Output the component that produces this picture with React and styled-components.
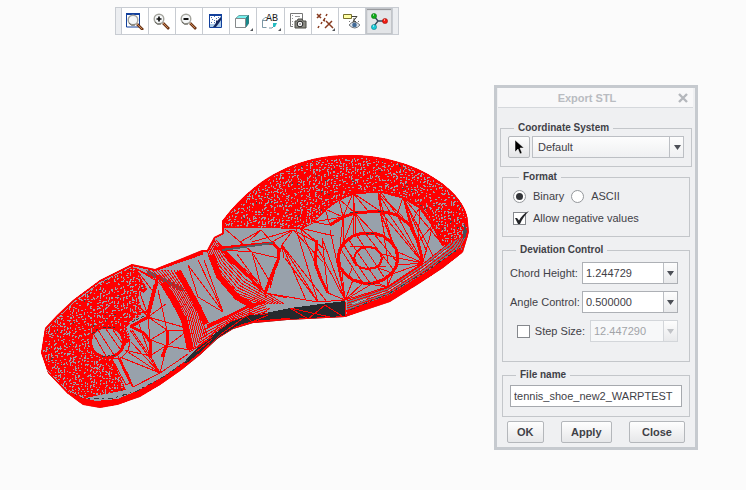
import React, { useState } from "react";
import styled, { createGlobalStyle } from "styled-components";

const GlobalStyle = createGlobalStyle`
  * {
    box-sizing: border-box;
  }
  body {
    margin: 0;
    background: #fbfbfb;
    color: #3f4147;
    font-family: "Liberation Sans", Arial, sans-serif;
    font-size: 11px;
  }
  button, input, select {
    font: inherit;
    color: inherit;
    margin: 0;
  }
`;

const Page = styled.div`
  min-height: 100vh;
  padding-top: 7px;
`;

const Toolbar = styled.div`
  display: flex;
  width: 284px;
  height: 28px;
  margin-left: 115px;
  padding: 0 5px;
  border: 1px solid #c8ccd2;
  background: #eceef1;
`;

const ToolButton = styled.button`
  position: relative;
  flex: 1;
  display: grid;
  place-items: center;
  padding: 0;
  border: 0;
  border-left: 1px solid #c8ccd2;
  background: ${(props) => (props.$active ? "#e3e5e8" : "#fff")};
  box-shadow: ${(props) =>
    props.$active ? "inset 0 0 0 1px #c2c5c9, inset 1px 2px 1px #8f9296" : "none"};
  &:last-child {
    border-right: 1px solid #c8ccd2;
  }
`;

const MoreMark = styled.span`
  position: absolute;
  right: 3px;
  bottom: 3px;
  border-left: 3px solid transparent;
  border-bottom: 3px solid #55585d;
`;

const Workspace = styled.main`
  display: flex;
  align-items: flex-start;
  justify-content: space-between;
  padding: 50px 48px 40px 36px;
`;

const Model = styled.svg`
  flex: none;
  width: 440px;
  height: 270px;
  margin-top: 62px;
`;

const Dialog = styled.section`
  flex: none;
  width: 204px;
  border: 3px solid #c6cacf;
  background: #eff0f2;
`;

const TitleBar = styled.header`
  display: flex;
  align-items: center;
  height: 20px;
  margin: 0 2px 0 1px;
  padding: 0 3px 0 0;
  border-bottom: 1px solid #d5d8dc;
  background: #f8f8f9;
  h1 {
    flex: 1;
    margin: 0;
    font-size: 11px;
    text-align: center;
    color: #b9bcc1;
  }
`;

const CloseIcon = styled.button`
  display: grid;
  place-items: center;
  width: 14px;
  height: 14px;
  padding: 0;
  border: 0;
  background: none;
`;

const Form = styled.form`
  display: flex;
  flex-direction: column;
  gap: 7px;
  padding: 14px 5px 4px;
`;

const Group = styled.fieldset`
  min-width: 0;
  margin: ${(props) => (props.$wide ? "0 -2px -3px" : "0")};
  padding: ${(props) => props.$pad || "2px 7px 8px"};
  border: 1px solid #c3c6ca;
  legend {
    margin-left: 6px;
    padding: 0 4px;
    font-size: 10px;
    font-weight: bold;
    line-height: 12px;
  }
`;

const Row = styled.div`
  display: flex;
  align-items: center;
  justify-content: ${(props) => props.$justify || "flex-start"};
  gap: ${(props) => props.$gap || "7px"};
  height: 22px;
`;

const Stack = styled.div`
  display: flex;
  flex-direction: column;
  gap: 7px;
`;

const PickButton = styled.button`
  display: grid;
  place-items: center;
  width: 22px;
  height: 22px;
  padding: 0;
  border: 1px solid #b4b7bb;
  border-radius: 2px;
  background: linear-gradient(#fdfdfd, #e4e5e7);
`;

const SelectBox = styled.div`
  display: grid;
  flex: 1;
  height: 22px;
  > * {
    grid-area: 1 / 1;
  }
  select {
    appearance: none;
    width: 100%;
    padding: 0 18px 0 5px;
    border: 1px solid #bcbfc4;
    border-radius: 0;
    background: linear-gradient(#fdfdfd, #eff0f2);
  }
`;

const SelectArrow = styled.span`
  justify-self: end;
  display: grid;
  place-items: center;
  width: 15px;
  border-left: 1px solid #bcbfc4;
  pointer-events: none;
`;

const Combo = styled.div`
  display: flex;
  width: ${(props) => (props.$short ? "88px" : "96px")};
  height: 22px;
  border: 1px solid ${(props) => (props.$off ? "#d3d6da" : "#adb0b5")};
  color: ${(props) => (props.$off ? "#a2a4a8" : "#3f4147")};
  input {
    flex: 1;
    min-width: 0;
    padding: 0 3px;
    border: 0;
    background: ${(props) => (props.$off ? "#f7f8f9" : "#fff")};
  }
  button {
    display: grid;
    place-items: center;
    width: 14px;
    padding: 0;
    border: 0;
    border-left: 1px solid ${(props) => (props.$off ? "#d3d6da" : "#bcbfc4")};
    background: linear-gradient(#fdfdfd, #e8e9eb);
  }
`;

const Radio = styled.input`
  appearance: none;
  display: grid;
  place-items: center;
  width: 13px;
  height: 13px;
  border: 1px solid #94979b;
  border-radius: 50%;
  background: #fff;
  &:checked::before {
    content: "";
    width: 7px;
    height: 7px;
    border-radius: 50%;
    background: #333539;
  }
`;

const CheckBox = styled.span`
  display: grid;
  width: 13px;
  height: 13px;
  > * {
    grid-area: 1 / 1;
  }
  input {
    appearance: none;
    width: 13px;
    height: 13px;
    border: 1px solid #85888d;
    background: #fff;
  }
  svg {
    display: none;
    overflow: visible;
    pointer-events: none;
  }
  input:checked + svg {
    display: block;
  }
`;

const FileInput = styled.input`
  display: block;
  width: 100%;
  height: 22px;
  padding: 0 3px;
  border: 1px solid #a6a9ae;
  background: #fff;
`;

const Actions = styled.div`
  display: flex;
  justify-content: space-between;
  margin-top: -3px;
  padding: 0 5px;
`;

const ActionButton = styled.button`
  height: 22px;
  padding: 0 ${(props) => props.$pad || "9px"};
  border: 1px solid #b4b7bb;
  border-radius: 2px;
  background: linear-gradient(#fefefe, #e6e7e9);
  font-weight: bold;
`;

// ---- small drawings ----

const Arrow = ({ off }) => (
  <svg width="7" height="5" viewBox="0 0 7 5">
    <path d="M0 0h7L3.5 5z" fill={off ? "#c0c2c6" : "#4d5057"} />
  </svg>
);

const Check = () => (
  <svg width="13" height="13" viewBox="0 0 13 13">
    <path d="M2 6 4 6 6 8.500C8 5 11 1 16 -1 12 3 9 7 7 12H5z" fill="#222428" />
  </svg>
);

const Lens = ({ x = 6, y = 7, children }) => (
  <g>
    <path d={`M${x + 4} ${y + 4}l6 6`} stroke="#6b3417" strokeWidth="2.6" />
    <path d={`M${x + 4} ${y + 4}l5 5`} stroke="#c98654" strokeWidth="1" />
    <circle cx={x} cy={y} r="4.8" fill="#f5f7f8" stroke="#a3a39c" strokeWidth="1.4" />
    <path d={`M${x - 4} ${y + 3}a5 5 0 0 0 6 2`} stroke="#66665f" fill="none" />
    {children}
  </g>
);

const tools = [
  {
    name: "Refit",
    icon: (
      <g>
        <path d="M.5 2v13h13V2z" fill="#fff" stroke="#12409c" />
        <path d="M0 2h14" stroke="#12409c" strokeWidth="2" />
        <Lens x={7} y={8} />
      </g>
    ),
  },
  {
    name: "Zoom in",
    icon: (
      <Lens>
        <path d="M3.5 7h5M6 4.500v5" stroke="#111" strokeWidth="1.7" />
      </Lens>
    ),
  },
  {
    name: "Zoom out",
    icon: (
      <Lens>
        <path d="M3.5 7h5" stroke="#111" strokeWidth="2" />
      </Lens>
    ),
  },
  {
    name: "Repaint",
    icon: (
      <g>
        <path d="M2.500 2.500h12v13h-12z" fill="#fff" stroke="#12409c" />
        <path d="M14 3v12H3v-3h4l4-3z" fill="#a9cbea" />
        <path d="M4 5.500h1M7 4.500h1M9 6.500h1M5 7.500h1M7 8.500h1M4 10.500h1M11 5.500h1M7 10.500h1" stroke="#4c73b4" />
        <path d="M14 5 10 9 9 8 9 11 6 15 9 15 12 11 14 8z" fill="#16285c" />
        <path d="M2 3h13" stroke="#12409c" strokeWidth="2" />
      </g>
    ),
  },
  {
    name: "Display style",
    more: true,
    icon: (
      <g strokeLinejoin="round">
        <path d="M1.500 6.500 5 3.500h10l-3.500 3z" fill="#75f0ee" stroke="#6ba5a5" />
        <path d="M11.500 6.500 14.500 3.500v8L11.500 15.500z" fill="#148a8c" stroke="#2b7c7e" />
        <path d="M1.500 6.500h10v9h-10z" fill="#fcfefe" stroke="#85898b" />
      </g>
    ),
  },
  {
    name: "Annotations",
    more: true,
    icon: (
      <g>
        <path d="M5 5.500H3L.5 8v7.500h4M.5 8.500H4M12 11.500v2.500l-2 2H7" fill="none" stroke="#7c98a6" />
        <path d="M11 11h4l-2 4h-2z" fill="#25bcc2" />
        <text x="4" y="9" fontFamily="Liberation Mono, monospace" fontSize="10" fill="#222">
          AB
        </text>
      </g>
    ),
  },
  {
    name: "Capture view",
    icon: (
      <g>
        <path d="M1.500 14.500v-13h12V8M1.500 14.500H4" fill="none" stroke="#777" />
        <path d="M3 3.500h1M3 6.500h1M3 9.500h1M3 12.500h1M6 4.500h5" stroke="#999" />
        <path d="M6 9h2l1-2h4l1 2h3v7H6z" fill="#8d8d86" stroke="#4a4a44" />
        <circle cx="11" cy="12" r="2.8" fill="#fafafa" stroke="#222" />
        <circle cx="11" cy="12" r="1" fill="#999" />
      </g>
    ),
  },
  {
    name: "Datum display",
    more: true,
    icon: (
      <g stroke="#873b20" strokeWidth="1.5" fill="none">
        <path d="m1 2 4 4M5 2 1 6M11 2l-1 2M9 6 8 8M6 10l-1 2M3 14l-1 2M7 8l2 1M10 9l7 7M16 9l-7 7" />
      </g>
    ),
  },
  {
    name: "Annotation display",
    icon: (
      <g>
        <path d="M.5 2.500h8v4h-8z" fill="#ffffa5" stroke="#77712d" />
        <path d="M9 4.500h5l-4 5h3M11 6v4" fill="none" stroke="#45453d" />
        <path d="M6 13q5-6 11 0-5 6-11 0z" fill="#dce5ee" stroke="#73777b" />
        <circle cx="11.5" cy="13" r="2.3" fill="#426b97" />
        <path d="M7 10l-1-1M15 10l1-1" stroke="#777" />
      </g>
    ),
  },
  {
    name: "Spin center",
    active: true,
    icon: (
      <g>
        <path d="m4 4 4 5h6M8 9l-4 5" fill="none" stroke="#344759" strokeWidth="1.3" />
        <circle cx="4" cy="4" r="2.6" fill="#0eab19" stroke="#086e0d" strokeWidth=".5" />
        <circle cx="15" cy="9" r="2.6" fill="#f21b12" stroke="#920c07" strokeWidth=".5" />
        <circle cx="4" cy="15" r="2.6" fill="#19cbd8" stroke="#08717a" strokeWidth=".5" />
        <path d="M3 3h1M14 8h1M3 14h1" stroke="#fff" />
      </g>
    ),
  },
];

// ---- shoe sole mesh ----

const line = (pts) => "M" + pts.map((p) => p.join(" ")).join("L");

const closed = (pts) => line(pts) + "Z";

const fan = (from, pts) => pts.map((p) => line([from, p])).join("");

// lines interpolated between two edges with the same number of points
const sweep = (a, b, n) => {
  let d = "";
  for (let i = 0; i <= n; i++) {
    const t = i / n;
    d += line(a.map((p, k) => [p[0] + (b[k][0] - p[0]) * t, p[1] + (b[k][1] - p[1]) * t]));
  }
  return d;
};

// triangles that zigzag from one edge to the other
const zigzag = (a, b) => line(a.flatMap((p, i) => (b[i] ? [p, b[i]] : [p])));

const ring = (cx, cy, rx, ry, n) =>
  Array.from({ length: n }, (_, i) => {
    const t = (i / n) * Math.PI * 2;
    return [Math.round(cx + Math.cos(t) * rx), Math.round(cy + Math.sin(t) * ry)];
  });

// tiny gaps left between the crowded mesh edges
const gaps = (x0, y0, w, h, seed, chance) => {
  let s = seed;
  const rnd = () => {
    s = (s * 1103515245 + 12345) % 2147483648;
    return s / 2147483648;
  };
  let d = "";
  for (let y = y0; y < y0 + h; y += 2) {
    for (let x = x0; x < x0 + w; x += 3) {
      if (rnd() < chance) {
        const px = x + Math.floor(rnd() * 2);
        const py = y + Math.floor(rnd() * 2);
        const shape = rnd();
        if (shape < 0.35) d += `M${px} ${py}h2v1h-2z`;
        else if (shape < 0.65) d += `M${px} ${py}h1v2h-1z`;
        else if (shape < 0.85) d += `M${px} ${py}h2v1h-1v1h-1z`;
        else d += `M${px} ${py}h1v1h-1z`;
      }
    }
  }
  return d;
};

const outline =
  "M222 221C250 184 290 155 350 155C420 155 468 195 468 222L469 232 463 252 443 268 417 285 390 302 360 312 345 317 287 320 253 323 233 329 217 339 200 355 180 371 160 385 140 397 117 405 100 408 83 405 67 393 48 373 41 353 45 328 57 315 73 300 100 280 132 264 155 269 180 259 202 250 207 250 214 237 222 233Z";
const toeTread =
  "M222 221C250 184 290 155 350 155C420 155 468 195 468 222L468 234 448 244 442 246 436 229 426 211 410 199 385 191 355 192 330 204 313 223 300 228 222 226Z";
const heelTread =
  "M132 264L100 280 73 300 45 328 41 353 48 373 67 393 85 398 126 390 112 358 131 340 126 327 143 313 138 297 147 290Z";

const ring2 = [[330, 225], [343, 217], [355, 213], [380, 211], [397, 215], [410, 225], [418, 242], [423, 262]];
const padEdge = [[300, 228], [313, 222], [325, 209], [339, 199], [353, 193], [380, 191], [403, 197], [420, 207], [433, 225], [443, 245]];
const outerRing = ring(368, 258, 30, 25, 18);
const innerRing = ring(368, 258, 14, 11, 12);
const heelRing = ring(107, 342, 17, 15, 14);

const thinMesh = [
  // arch panel
  fan([223, 312], [[188, 265], [198, 260], [204, 260], [198, 297]]),
  fan([198, 297], [[188, 265], [223, 312]]),
  sweep([[207, 250], [215, 272], [232, 294], [262, 304]], [[214, 240], [225, 257], [245, 279], [284, 304]], 7),
  sweep([[216, 240], [232, 258], [258, 281]], [[221, 252], [246, 275], [267, 297]], 4),
  sweep([[146, 270], [168, 292], [183, 317], [190, 352]], [[177, 270], [187, 288], [198, 307], [207, 335]], 10),
  sweep([[203, 330], [232, 317], [265, 302]], [[196, 352], [230, 325], [268, 313]], 5),
  zigzag([[190, 352], [208, 340], [224, 331], [240, 322], [258, 317]], [[205, 341], [218, 327], [234, 318], [250, 313], [270, 308]]),
  // ball of the foot
  fan([252, 252], [[225, 229], [278, 258], [272, 285], [224, 250], [262, 290]]),
  fan([293, 230], [[272, 242], [282, 245], [316, 242], [252, 242], [323, 262]]),
  fan([261, 230], [[240, 242], [272, 242], [250, 240]]),
  fan([282, 245], [[327, 302], [318, 302], [306, 300], [270, 288], [284, 258]]),
  fan([265, 293], [[225, 256], [230, 255], [237, 254], [279, 261], [287, 298]]),
  fan([318, 302], [[296, 229], [285, 258], [265, 293], [345, 300]]),
  fan([300, 228], [[328, 293], [317, 242], [334, 236], [315, 222], [325, 250]]),
  fan([328, 293], [[315, 263], [322, 238], [345, 300]]),
  fan([345, 300], [[315, 243], [322, 238], [330, 230], [338, 260], [342, 272], [353, 280], [363, 283], [375, 282], [387, 287]]),
  zigzag(padEdge.slice(1, 9), ring2),
  fan([353, 193], [[353, 236], [343, 217], [368, 211]]),
  fan([343, 217], [[343, 240], [339, 258], [313, 222]]),
  fan([378, 193], [[384, 233], [390, 212], [403, 217], [393, 244]]),
  fan([403, 197], [[433, 256], [420, 248], [412, 228], [427, 252], [443, 245], [439, 240]]),
  fan([423, 263], [[380, 211], [388, 213], [397, 215], [398, 252], [398, 258], [397, 265], [387, 276], [403, 197], [387, 287]]),
  fan([387, 287], [[363, 283], [375, 282], [388, 275], [398, 262]]),
  fan([355, 213], [[355, 235], [365, 233], [373, 232], [340, 250]]),
  fan([380, 211], [[393, 245], [385, 237], [397, 252]]),
  // recessed disc
  "M340 248L362 282M343 244L370 283M349 240L378 282M345 246L356 266M357 236L384 277M365 233L393 269M374 234L397 262M384 236L388 262M350 246L366 247M382 254L398 258M370 268L386 266M352 268L349 276M376 267L392 273",
  // rim on the toe side
  sweep([[347, 301], [387, 288], [423, 264], [448, 244], [466, 225]], [[347, 315], [390, 301], [430, 276], [461, 254], [468, 235]], 6),
  // heel
  fan([160, 373], [[120, 357], [125, 350], [131, 342], [130, 330], [150, 355], [133, 387], [167, 345], [188, 354]]),
  fan([133, 387], [[112, 358], [120, 358], [116, 352], [127, 372]]),
  fan([148, 317], [[132, 327], [150, 340], [158, 282], [167, 330], [183, 327], [142, 310], [166, 304]]),
  fan([167, 330], [[158, 290], [188, 330], [150, 340]]),
  fan([167, 346], [[186, 332], [190, 350], [151, 340]]),
  fan([150, 356], [[132, 330], [139, 324], [125, 350], [167, 345]]),
  fan([135, 268], [[147, 290], [152, 290], [154, 278], [158, 282]]),
  fan([147, 313], [[139, 290], [154, 285], [135, 305]]),
  closed(ring(107, 342, 23, 21, 14)),
].join("");

const ridgeMesh = [
  line([[222, 227], [262, 226], [300, 228]]),
  line(padEdge),
  line([[214, 249], [240, 246], [273, 243], [279, 250], [278, 260], [273, 272], [265, 293]]),
  line([[317, 240], [315, 263], [321, 279], [328, 293]]),
  line([[157, 269], [180, 261], [203, 253]]),
  line([[207, 326], [227, 317], [247, 307], [265, 302]]),
  line([[158, 275], [153, 297], [148, 317], [130, 327]]),
  line([[132, 327], [144, 333], [151, 343], [150, 358]]),
  line([[167, 330], [167, 345], [162, 357]]),
  line(ring2),
  closed(outerRing),
].join("");

const heavyMesh = [
  line([[163, 283], [174, 301], [184, 320], [190, 350]]),
  line([[178, 271], [188, 289], [198, 307], [206, 324]]),
  line([[211, 255], [219, 276], [237, 297], [254, 307]]),
  line([[60, 389], [80, 400], [96, 404], [118, 402], [142, 392], [165, 379], [186, 364]]),
  line([[347, 313], [390, 298], [430, 273], [461, 251]]),
].join("");

const Shoe = () => (
  <Model viewBox="36 147 440 270" role="img" aria-label="Shoe sole mesh" shapeRendering="crispEdges">
    <defs>
      <clipPath id="sole">
        <path d={outline} />
      </clipPath>
      <clipPath id="toe">
        <path d={toeTread} />
      </clipPath>
      <clipPath id="heel">
        <path d={heelTread} />
      </clipPath>
    </defs>
    <g clipPath="url(#sole)" fill="none">
      <path d={outline} fill="#98a1ab" />
      {/* shaded side wall */}
      <path d="M186 360L203 342 230 323 260 314 290 308 345 301 347 318 287 321 253 324 233 330 203 354 180 373Z" fill="#262a2e" />
      <path d="M347 300L387 287 423 265 467 226 470 250 417 286 347 317Z" fill="#747d85" />
      <path d="M147 272L184 290" stroke="#555d64" strokeWidth="4" />
      <path d={thinMesh} stroke="#ff0000" />
      <path d={ridgeMesh} stroke="#ff0000" strokeWidth="3" />
      <path d={heavyMesh} stroke="#ff0000" strokeWidth="6" />
      <path d={closed(innerRing)} stroke="#ff0000" strokeWidth="2" />
      <path d="M222 250L273 243" stroke="#555d64" strokeWidth="2" />
      <path d="M350 310L390 293 428 270 460 248M67 393L85 398 110 399 137 391 165 376 188 360" stroke="#343b40" strokeDasharray="5 3 2 4" />
      <path d="M352 304L388 291 422 269 447 249" stroke="#a8b1b9" strokeDasharray="16 3" />
      <path d={toeTread} fill="#ff0000" />
      <path d={heelTread} fill="#ff0000" />
      <g clipPath="url(#toe)">
        <path d={gaps(222, 158, 248, 88, 17, 0.62)} fill="#98a1ab" />
        <path d={gaps(222, 158, 248, 88, 91, 0.03)} fill="#3b4349" />
      </g>
      <g clipPath="url(#heel)">
        <path d={gaps(42, 266, 106, 130, 43, 0.6)} fill="#98a1ab" />
        <path d={gaps(42, 266, 106, 130, 7, 0.02)} fill="#3b4349" />
      </g>
      <path d={closed(heelRing)} fill="#98a1ab" stroke="#ff0000" strokeWidth="3" />
      <path d="M94 335L106 356M98 330L114 355M106 329L120 349M113 330L122 343" stroke="#ff0000" />
      <path d="M112 359L118 358 130 383 126 385Z" fill="#98a1ab" stroke="#ff0000" />
      <path d="M92 334L99 328M103 327L115 327M102 357L115 355M132 322L146 315M350 213L358 212M378 211L384 211M366 233L374 233M368 283L374 283" stroke="#33393e" strokeDasharray="3 2" />
      <path d="M464 222L468 234 463 239Z" fill="#474f55" />
      <path d={outline} stroke="#ff0000" strokeWidth="4" />
      <path d="M46 330L74 302 101 282 131 267M45 368L66 389 84 398" stroke="#98a1ab" strokeDasharray="9 2" />
      <path d="M290 308L345 302 345 316 290 319Z" fill="#24282c" />
      <path d="M290 308L308 319 325 305 342 316M290 308L330 317M345 302L345 317" stroke="#ff0000" />
      <path d="M207 350L219 337 235 327 250 321 260 320 274 315 250 315 231 322 214 334Z" fill="#24282c" />
      <path d="M208 347L221 334 234 325 246 316 252 322 268 315" stroke="#ff0000" />
    </g>
  </Model>
);

const ComboBox = ({ id, value, onChange, off, short }) => (
  <Combo $off={off} $short={short}>
    <input id={id} value={value} disabled={off} onChange={(e) => onChange(e.target.value)} />
    <button type="button" disabled={off} aria-label="Show values">
      <Arrow off={off} />
    </button>
  </Combo>
);

const App = () => {
  const [format, setFormat] = useState("binary");
  const [negative, setNegative] = useState(true);
  const [stepOn, setStepOn] = useState(false);
  const [chord, setChord] = useState("1.244729");
  const [angle, setAngle] = useState("0.500000");
  const [step, setStep] = useState("12.447290");
  const [fileName, setFileName] = useState("tennis_shoe_new2_WARPTEST");

  return (
    <Page>
      <GlobalStyle />
      <Toolbar role="toolbar">
        {tools.map((tool) => (
          <ToolButton key={tool.name} type="button" aria-label={tool.name} $active={tool.active}>
            <svg width="18" height="18" viewBox="0 0 18 18">
              {tool.icon}
            </svg>
            {tool.more && <MoreMark />}
          </ToolButton>
        ))}
      </Toolbar>

      <Workspace>
        <Shoe />
        <Dialog role="dialog" aria-labelledby="title">
          <TitleBar>
            <h1 id="title">Export STL</h1>
            <CloseIcon type="button" aria-label="Close dialog">
              <svg width="10" height="10" viewBox="0 0 10 10">
                <path d="m1 1 8 8M9 1 1 9" stroke="#b4b7bc" strokeWidth="2.4" />
              </svg>
            </CloseIcon>
          </TitleBar>

          <Form onSubmit={(e) => e.preventDefault()}>
            <Group $wide>
              <legend>Coordinate System</legend>
              <Row $gap="2px">
                <PickButton type="button" aria-label="Pick coordinate system">
                  <svg width="12" height="16" viewBox="0 0 12 16">
                    <path d="M2 1v12l3-3 2 5 2-1-2-5h4z" fill="#000" stroke="#fff" strokeWidth=".5" />
                  </svg>
                </PickButton>
                <SelectBox>
                  <select aria-label="Coordinate System">
                    <option>Default</option>
                  </select>
                  <SelectArrow>
                    <Arrow />
                  </SelectArrow>
                </SelectBox>
              </Row>
            </Group>

            <Group $pad="2px 10px 7px">
              <legend>Format</legend>
              <Row>
                <Radio
                  id="binary"
                  type="radio"
                  name="format"
                  checked={format === "binary"}
                  onChange={() => setFormat("binary")}
                />
                <label htmlFor="binary">Binary</label>
                <Radio
                  id="ascii"
                  type="radio"
                  name="format"
                  checked={format === "ascii"}
                  onChange={() => setFormat("ascii")}
                />
                <label htmlFor="ascii">ASCII</label>
              </Row>
              <Row>
                <CheckBox>
                  <input
                    id="negative"
                    type="checkbox"
                    checked={negative}
                    onChange={() => setNegative(!negative)}
                  />
                  <Check />
                </CheckBox>
                <label htmlFor="negative">Allow negative values</label>
              </Row>
            </Group>

            <Group $pad="6px 11px 19px 7px">
              <legend>Deviation Control</legend>
              <Stack>
                <Row $gap="0" $justify="space-between">
                  <label htmlFor="chord">Chord Height:</label>
                  <ComboBox id="chord" value={chord} onChange={setChord} />
                </Row>
                <Row $gap="0" $justify="space-between">
                  <label htmlFor="angle">Angle Control:</label>
                  <ComboBox id="angle" value={angle} onChange={setAngle} />
                </Row>
                <Row $gap="5px" $justify="flex-end">
                  <CheckBox>
                    <input
                      id="stepOn"
                      type="checkbox"
                      checked={stepOn}
                      onChange={() => setStepOn(!stepOn)}
                    />
                    <Check />
                  </CheckBox>
                  <label htmlFor="stepOn">Step Size:</label>
                  <ComboBox id="step" value={step} onChange={setStep} off={!stepOn} short />
                </Row>
              </Stack>
            </Group>

            <Group $pad="4px 7px 9px">
              <legend>
                <label htmlFor="fileName">File name</label>
              </legend>
              <FileInput
                id="fileName"
                value={fileName}
                onChange={(e) => setFileName(e.target.value)}
              />
            </Group>

            <Actions>
              <ActionButton type="submit">OK</ActionButton>
              <ActionButton type="button">Apply</ActionButton>
              <ActionButton type="button" $pad="12px">
                Close
              </ActionButton>
            </Actions>
          </Form>
        </Dialog>
      </Workspace>
    </Page>
  );
};

export default App;
